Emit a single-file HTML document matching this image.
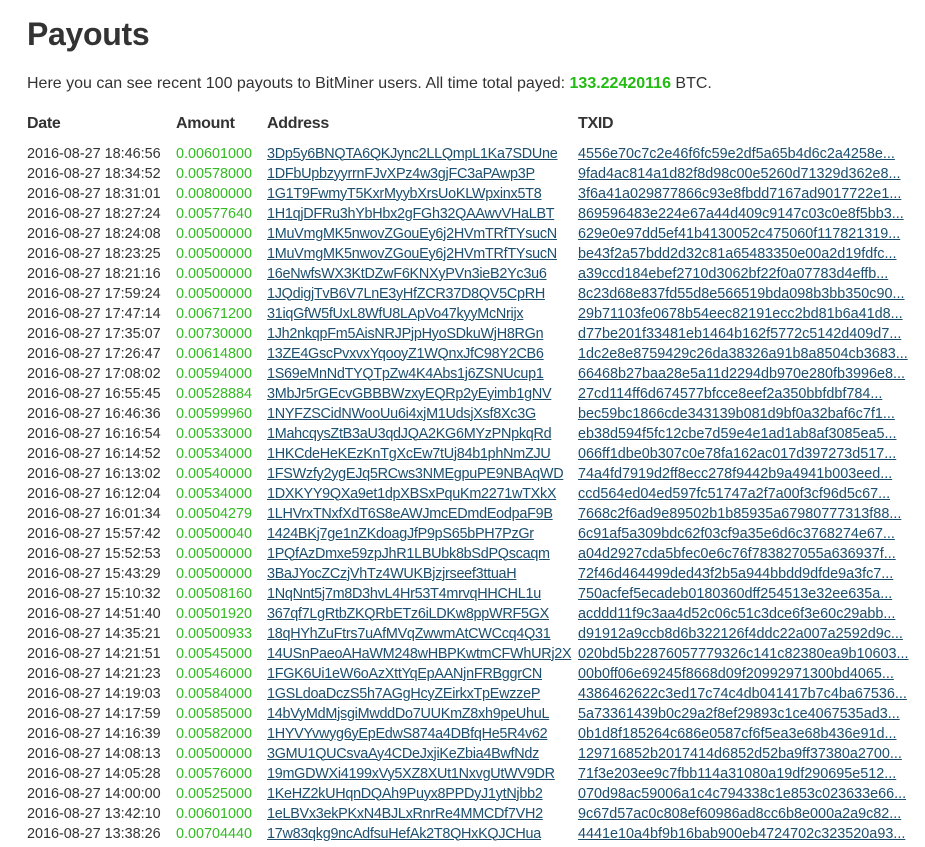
<!DOCTYPE html>
<html><head><meta charset="utf-8"><style>
html,body{margin:0;padding:0;background:#fff;width:925px;height:847px;overflow:hidden}
body{font-family:"Liberation Sans",Arial,sans-serif;color:#333;position:relative}
h1{position:absolute;left:27px;top:12px;margin:0;font-size:32px;font-weight:bold;color:#333;letter-spacing:-0.3px;line-height:44px}
p{position:absolute;left:27px;top:74px;margin:0;font-size:16px;line-height:20px}
p b{color:#22bb11}
.hd{position:absolute;top:114px;font-size:16px;font-weight:bold;line-height:20px;letter-spacing:-0.3px}
.t{position:absolute;left:27px;top:143.5px;font-size:14.4px}
.r{height:20px;line-height:20px;white-space:nowrap;position:relative}
.r span{position:absolute;top:0}
.d{left:0}.a{left:149px;color:#33bb22}.ad{left:240px;letter-spacing:-0.27px}.x{left:551px}
a{color:#1d4f6e;text-decoration:underline}
</style></head><body>
<h1>Payouts</h1>
<p>Here you can see recent 100 payouts to BitMiner users. All time total payed: <b>133.22420116</b> BTC.</p>
<div class="hd" style="left:27px">Date</div>
<div class="hd" style="left:176px">Amount</div>
<div class="hd" style="left:267px">Address</div>
<div class="hd" style="left:578px">TXID</div>
<div class="t">
<div class="r"><span class="d">2016-08-27 18:46:56</span><span class="a">0.00601000</span><span class="ad"><a>3Dp5y6BNQTA6QKJync2LLQmpL1Ka7SDUne</a></span><span class="x"><a>4556e70c7c2e46f6fc59e2df5a65b4d6c2a4258e...</a></span></div>
<div class="r"><span class="d">2016-08-27 18:34:52</span><span class="a">0.00578000</span><span class="ad"><a>1DFbUpbzyyrrnFJvXPz4w3gjFC3aPAwp3P</a></span><span class="x"><a>9fad4ac814a1d82f8d98c00e5260d71329d362e8...</a></span></div>
<div class="r"><span class="d">2016-08-27 18:31:01</span><span class="a">0.00800000</span><span class="ad"><a>1G1T9FwmyT5KxrMyybXrsUoKLWpxinx5T8</a></span><span class="x"><a>3f6a41a029877866c93e8fbdd7167ad9017722e1...</a></span></div>
<div class="r"><span class="d">2016-08-27 18:27:24</span><span class="a">0.00577640</span><span class="ad"><a>1H1qjDFRu3hYbHbx2gFGh32QAAwvVHaLBT</a></span><span class="x"><a>869596483e224e67a44d409c9147c03c0e8f5bb3...</a></span></div>
<div class="r"><span class="d">2016-08-27 18:24:08</span><span class="a">0.00500000</span><span class="ad"><a>1MuVmgMK5nwovZGouEy6j2HVmTRfTYsucN</a></span><span class="x"><a>629e0e97dd5ef41b4130052c475060f117821319...</a></span></div>
<div class="r"><span class="d">2016-08-27 18:23:25</span><span class="a">0.00500000</span><span class="ad"><a>1MuVmgMK5nwovZGouEy6j2HVmTRfTYsucN</a></span><span class="x"><a>be43f2a57bdd2d32c81a65483350e00a2d19fdfc...</a></span></div>
<div class="r"><span class="d">2016-08-27 18:21:16</span><span class="a">0.00500000</span><span class="ad"><a>16eNwfsWX3KtDZwF6KNXyPVn3ieB2Yc3u6</a></span><span class="x"><a>a39ccd184ebef2710d3062bf22f0a07783d4effb...</a></span></div>
<div class="r"><span class="d">2016-08-27 17:59:24</span><span class="a">0.00500000</span><span class="ad"><a>1JQdigjTvB6V7LnE3yHfZCR37D8QV5CpRH</a></span><span class="x"><a>8c23d68e837fd55d8e566519bda098b3bb350c90...</a></span></div>
<div class="r"><span class="d">2016-08-27 17:47:14</span><span class="a">0.00671200</span><span class="ad"><a>31iqGfW5fUxL8WfU8LApVo47kyyMcNrijx</a></span><span class="x"><a>29b71103fe0678b54eec82191ecc2bd81b6a41d8...</a></span></div>
<div class="r"><span class="d">2016-08-27 17:35:07</span><span class="a">0.00730000</span><span class="ad"><a>1Jh2nkqpFm5AisNRJPjpHyoSDkuWjH8RGn</a></span><span class="x"><a>d77be201f33481eb1464b162f5772c5142d409d7...</a></span></div>
<div class="r"><span class="d">2016-08-27 17:26:47</span><span class="a">0.00614800</span><span class="ad"><a>13ZE4GscPvxvxYqooyZ1WQnxJfC98Y2CB6</a></span><span class="x"><a>1dc2e8e8759429c26da38326a91b8a8504cb3683...</a></span></div>
<div class="r"><span class="d">2016-08-27 17:08:02</span><span class="a">0.00594000</span><span class="ad"><a>1S69eMnNdTYQTpZw4K4Abs1j6ZSNUcup1</a></span><span class="x"><a>66468b27baa28e5a11d2294db970e280fb3996e8...</a></span></div>
<div class="r"><span class="d">2016-08-27 16:55:45</span><span class="a">0.00528884</span><span class="ad"><a>3MbJr5rGEcvGBBBWzxyEQRp2yEyimb1gNV</a></span><span class="x"><a>27cd114ff6d674577bfcce8eef2a350bbfdbf784...</a></span></div>
<div class="r"><span class="d">2016-08-27 16:46:36</span><span class="a">0.00599960</span><span class="ad"><a>1NYFZSCidNWooUu6i4xjM1UdsjXsf8Xc3G</a></span><span class="x"><a>bec59bc1866cde343139b081d9bf0a32baf6c7f1...</a></span></div>
<div class="r"><span class="d">2016-08-27 16:16:54</span><span class="a">0.00533000</span><span class="ad"><a>1MahcqysZtB3aU3qdJQA2KG6MYzPNpkqRd</a></span><span class="x"><a>eb38d594f5fc12cbe7d59e4e1ad1ab8af3085ea5...</a></span></div>
<div class="r"><span class="d">2016-08-27 16:14:52</span><span class="a">0.00534000</span><span class="ad"><a>1HKCdeHeKEzKnTgXcEw7tUj84b1phNmZJU</a></span><span class="x"><a>066ff1dbe0b307c0e78fa162ac017d397273d517...</a></span></div>
<div class="r"><span class="d">2016-08-27 16:13:02</span><span class="a">0.00540000</span><span class="ad"><a>1FSWzfy2ygEJq5RCws3NMEgpuPE9NBAqWD</a></span><span class="x"><a>74a4fd7919d2ff8ecc278f9442b9a4941b003eed...</a></span></div>
<div class="r"><span class="d">2016-08-27 16:12:04</span><span class="a">0.00534000</span><span class="ad"><a>1DXKYY9QXa9et1dpXBSxPquKm2271wTXkX</a></span><span class="x"><a>ccd564ed04ed597fc51747a2f7a00f3cf96d5c67...</a></span></div>
<div class="r"><span class="d">2016-08-27 16:01:34</span><span class="a">0.00504279</span><span class="ad"><a>1LHVrxTNxfXdT6S8eAWJmcEDmdEodpaF9B</a></span><span class="x"><a>7668c2f6ad9e89502b1b85935a67980777313f88...</a></span></div>
<div class="r"><span class="d">2016-08-27 15:57:42</span><span class="a">0.00500040</span><span class="ad"><a>1424BKj7ge1nZKdoagJfP9pS65bPH7PzGr</a></span><span class="x"><a>6c91af5a309bdc62f03cf9a35e6d6c3768274e67...</a></span></div>
<div class="r"><span class="d">2016-08-27 15:52:53</span><span class="a">0.00500000</span><span class="ad"><a>1PQfAzDmxe59zpJhR1LBUbk8bSdPQscaqm</a></span><span class="x"><a>a04d2927cda5bfec0e6c76f783827055a636937f...</a></span></div>
<div class="r"><span class="d">2016-08-27 15:43:29</span><span class="a">0.00500000</span><span class="ad"><a>3BaJYocZCzjVhTz4WUKBjzjrseef3ttuaH</a></span><span class="x"><a>72f46d464499ded43f2b5a944bbdd9dfde9a3fc7...</a></span></div>
<div class="r"><span class="d">2016-08-27 15:10:32</span><span class="a">0.00508160</span><span class="ad"><a>1NqNnt5j7m8D3hvL4Hr53T4mrvqHHCHL1u</a></span><span class="x"><a>750acfef5ecadeb0180360dff254513e32ee635a...</a></span></div>
<div class="r"><span class="d">2016-08-27 14:51:40</span><span class="a">0.00501920</span><span class="ad"><a>367qf7LgRtbZKQRbETz6iLDKw8ppWRF5GX</a></span><span class="x"><a>acddd11f9c3aa4d52c06c51c3dce6f3e60c29abb...</a></span></div>
<div class="r"><span class="d">2016-08-27 14:35:21</span><span class="a">0.00500933</span><span class="ad"><a>18qHYhZuFtrs7uAfMVqZwwmAtCWCcq4Q31</a></span><span class="x"><a>d91912a9ccb8d6b322126f4ddc22a007a2592d9c...</a></span></div>
<div class="r"><span class="d">2016-08-27 14:21:51</span><span class="a">0.00545000</span><span class="ad"><a>14USnPaeoAHaWM248wHBPKwtmCFWhURj2X</a></span><span class="x"><a>020bd5b22876057779326c141c82380ea9b10603...</a></span></div>
<div class="r"><span class="d">2016-08-27 14:21:23</span><span class="a">0.00546000</span><span class="ad"><a>1FGK6Ui1eW6oAzXttYqEpAANjnFRBggrCN</a></span><span class="x"><a>00b0ff06e69245f8668d09f20992971300bd4065...</a></span></div>
<div class="r"><span class="d">2016-08-27 14:19:03</span><span class="a">0.00584000</span><span class="ad"><a>1GSLdoaDczS5h7AGgHcyZEirkxTpEwzzeP</a></span><span class="x"><a>4386462622c3ed17c74c4db041417b7c4ba67536...</a></span></div>
<div class="r"><span class="d">2016-08-27 14:17:59</span><span class="a">0.00585000</span><span class="ad"><a>14bVyMdMjsgiMwddDo7UUKmZ8xh9peUhuL</a></span><span class="x"><a>5a73361439b0c29a2f8ef29893c1ce4067535ad3...</a></span></div>
<div class="r"><span class="d">2016-08-27 14:16:39</span><span class="a">0.00582000</span><span class="ad"><a>1HYVYvwyg6yEpEdwS874a4DBfqHe5R4v62</a></span><span class="x"><a>0b1d8f185264c686e0587cf6f5ea3e68b436e91d...</a></span></div>
<div class="r"><span class="d">2016-08-27 14:08:13</span><span class="a">0.00500000</span><span class="ad"><a>3GMU1QUCsvaAy4CDeJxjiKeZbia4BwfNdz</a></span><span class="x"><a>129716852b2017414d6852d52ba9ff37380a2700...</a></span></div>
<div class="r"><span class="d">2016-08-27 14:05:28</span><span class="a">0.00576000</span><span class="ad"><a>19mGDWXi4199xVy5XZ8XUt1NxvgUtWV9DR</a></span><span class="x"><a>71f3e203ee9c7fbb114a31080a19df290695e512...</a></span></div>
<div class="r"><span class="d">2016-08-27 14:00:00</span><span class="a">0.00525000</span><span class="ad"><a>1KeHZ2kUHqnDQAh9Puyx8PPDyJ1ytNjbb2</a></span><span class="x"><a>070d98ac59006a1c4c794338c1e853c023633e66...</a></span></div>
<div class="r"><span class="d">2016-08-27 13:42:10</span><span class="a">0.00601000</span><span class="ad"><a>1eLBVx3ekPKxN4BJLxRnrRe4MMCDf7VH2</a></span><span class="x"><a>9c67d57ac0c808ef60986ad8cc6b8e000a2a9c82...</a></span></div>
<div class="r"><span class="d">2016-08-27 13:38:26</span><span class="a">0.00704440</span><span class="ad"><a>17w83qkg9ncAdfsuHefAk2T8QHxKQJCHua</a></span><span class="x"><a>4441e10a4bf9b16bab900eb4724702c323520a93...</a></span></div>
</div>
</body></html>
